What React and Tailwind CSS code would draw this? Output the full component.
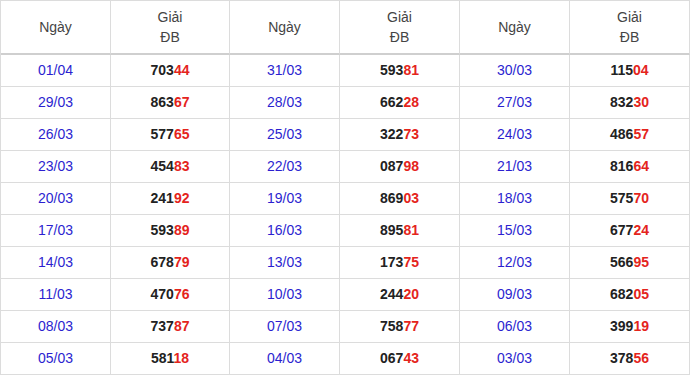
import React from "react";

const rows = [
  ["01/04", "70344", "31/03", "59381", "30/03", "11504"],
  ["29/03", "86367", "28/03", "66228", "27/03", "83230"],
  ["26/03", "57765", "25/03", "32273", "24/03", "48657"],
  ["23/03", "45483", "22/03", "08798", "21/03", "81664"],
  ["20/03", "24192", "19/03", "86903", "18/03", "57570"],
  ["17/03", "59389", "16/03", "89581", "15/03", "67724"],
  ["14/03", "67879", "13/03", "17375", "12/03", "56695"],
  ["11/03", "47076", "10/03", "24420", "09/03", "68205"],
  ["08/03", "73787", "07/03", "75877", "06/03", "39919"],
  ["05/03", "58118", "04/03", "06743", "03/03", "37856"],
];

const cell = "flex items-center justify-center border-r border-b border-[#dcdcdc]";

function Prize({ value }) {
  return (
    <span className="font-bold text-[#222]">
      {value.slice(0, 3)}
      <span className="text-[#e4241c]">{value.slice(3)}</span>
    </span>
  );
}

export default function App() {
  return (
    <div className="w-[690px] h-[375px] bg-white font-['Liberation_Sans',Arial,sans-serif] text-[14px]">
      <div className="grid grid-cols-[110px_119px_110px_120px_110px_120px] border-l border-t border-[#dcdcdc]">
        {[0, 1, 2].map((i) => (
          <React.Fragment key={i}>
            <div className="flex h-[54px] items-center justify-center border-r border-b-2 border-[#dcdcdc] border-b-[#cfcfcf] text-[#444]">
              Ngày
            </div>
            <div className="flex h-[54px] flex-col items-center justify-center border-r border-b-2 border-[#dcdcdc] border-b-[#cfcfcf] leading-[20px] text-[#444]">
              <span>Giải</span>
              <span>ĐB</span>
            </div>
          </React.Fragment>
        ))}
        {rows.map((r, ri) =>
          [0, 2, 4].map((c) => (
            <React.Fragment key={`${ri}-${c}`}>
              <div className={`${cell} h-[32px] text-[#2c1fd0]`}>{r[c]}</div>
              <div className={`${cell} h-[32px]`}>
                <Prize value={r[c + 1]} />
              </div>
            </React.Fragment>
          ))
        )}
      </div>
    </div>
  );
}
